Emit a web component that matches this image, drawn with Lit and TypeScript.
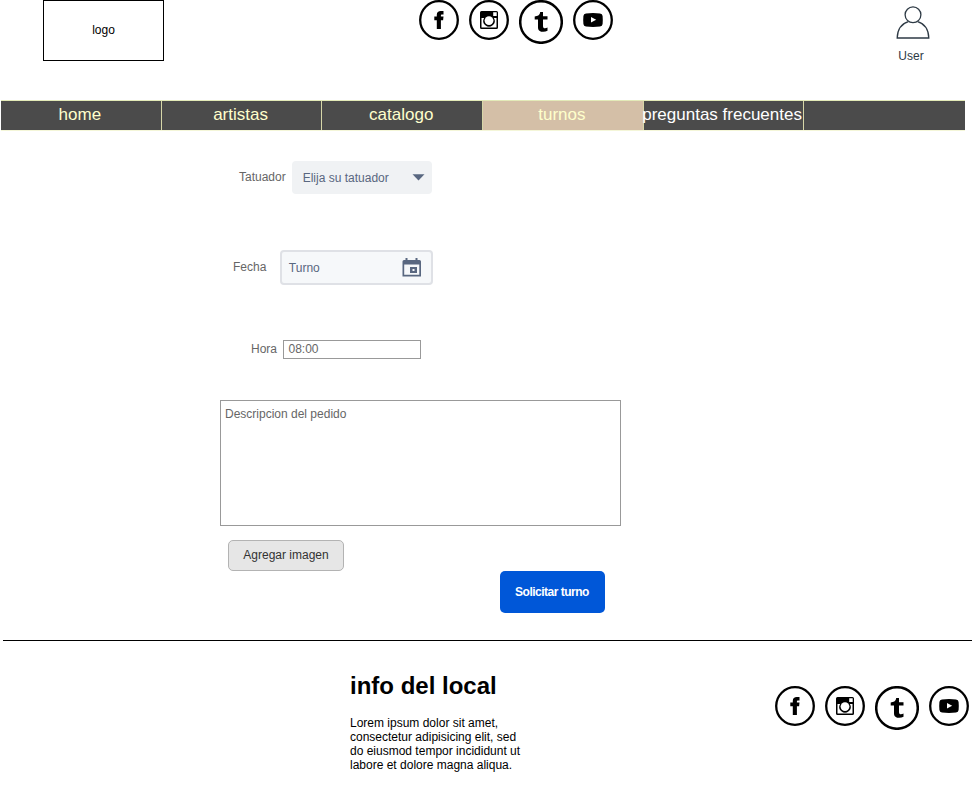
import { LitElement, html, css } from "lit";
import { customElement } from "lit/decorators.js";

@customElement("social-links")
class SocialLinks extends LitElement {
  static styles = css`
    :host { display: flex; gap: 10px; align-items: flex-start; }
    svg { display: block; }
  `;
  render() {
    return html`
      <svg width="40" height="40" viewBox="0 0 40 40">
        <circle cx="20" cy="20" r="18.8" fill="#fff" stroke="#000" stroke-width="2.3" />
        <path d="M17.8 29V20.3H15.3V16.6H17.8V14.8C17.8 12.2 19.4 11 21.8 11H24.5V14.4H23.2C22.1 14.4 21.9 14.9 21.9 15.7V16.6H24.5L24.1 20.3H21.9V29Z" />
      </svg>
      <svg width="40" height="40" viewBox="0 0 40 40">
        <circle cx="20" cy="20" r="18.8" fill="#fff" stroke="#000" stroke-width="2.3" />
        <path fill-rule="evenodd" d="M12.500 11H27.500Q29 11 29 12.500V27.500Q29 29 27.500 29H12.500Q11 29 11 27.500V12.500Q11 11 12.500 11ZM24.200 12.300V16H27.700V12.300ZM12.500 18V27.500H27.500V18H24.900A5.700 5.700 0 1 1 15.100 18Z" />
        <circle cx="20" cy="20.600" r="4.400" fill="#fff" />
      </svg>
      <svg width="44" height="44" viewBox="0 0 44 44">
        <circle cx="22" cy="22" r="20.800" fill="#fff" stroke="#000" stroke-width="2.500" />
        <path d="M18.600 15.800C20.200 15.200 21 13.800 21.200 12H24V16.200H28.500V19.600H24V26C24 27.800 24.700 28.300 25.900 28.300C26.900 28.300 27.700 28 28.500 27.600V30.800C27.200 31.500 25.800 31.800 24.300 31.800C21.200 31.800 19 30.400 19 27.400V19.600H15.700V16.600Z" />
      </svg>
      <svg width="40" height="40" viewBox="0 0 40 40">
        <circle cx="20" cy="20" r="18.800" fill="#fff" stroke="#000" stroke-width="2.300" />
        <path d="M13 13.400Q20 12.600 27 13.400Q29.400 13.600 29.600 16Q30 20 29.600 24Q29.400 26.400 27 26.600Q20 27.400 13 26.600Q10.600 26.400 10.400 24Q10 20 10.400 16Q10.600 13.600 13 13.400Z" />
        <path d="M18 17L23.200 19.800L18 22.600Z" fill="#fff" />
      </svg>
    `;
  }
}

@customElement("app-root")
class AppRoot extends LitElement {
  static styles = css`
    :host {
      display: flex; flex-direction: column; width: 974px; height: 787px; overflow: hidden;
      background: #fff; color: #000; font: 12px/14px "Liberation Sans", Arial, sans-serif;
      box-sizing: border-box;
    }
    * { box-sizing: border-box; }
    header { display: flex; height: 100px; align-items: flex-start; flex: none; }
    .logo { width: 121px; height: 61px; margin-left: 43px; padding-bottom: 2px; border: 1px solid #000; display: flex; align-items: center; justify-content: center; }
    .top-social { margin-left: 255px; }
    .user { margin-left: 283px; width: 33px; padding-top: 6px; display: flex; flex-direction: column; align-items: center; color: #2e3a45; }
    .user svg { display: block; margin-bottom: 10px; }
    .user .t { margin-left: -3px; }
    nav { display: flex; flex: none; height: 31px; width: 964px; margin-left: 1px; border-top: 1px solid #e3eab8; border-bottom: 1px solid #f4f6d8; background: #4b4b4b; }
    .tab { width: 160.7px; flex: none; padding-right: 2px; border-right: 1px solid #d6d6a8; color: #ffffcc; font-size: 17px; line-height: 27px; white-space: nowrap; display: flex; justify-content: center; }
    .tab.active { background: #d4bfa7; }
    .tab.light { color: #fff; padding-right: 3px; }
    main { display: flex; flex-direction: column; align-items: flex-start; height: 509px; flex: none; color: #666; }
    .row { display: flex; align-items: center; }
    .r1 { margin: 29px 0 0 239px; height: 34px; }
    .select { width: 140px; height: 33px; margin-left: 6px; padding: 1px 7px 0 11px; border-radius: 4px; background: #f0f2f4; color: #596780; display: flex; align-items: center; justify-content: space-between; }
    .r2 { margin: 55px 0 0 233px; height: 36px; }
    .date { width: 153px; height: 35px; margin-left: 13.500px; padding: 1px 10px 0 7px; border: 2px solid #dfe1e6; border-radius: 4px; background: #f6f8fa; color: #596780; display: flex; align-items: center; justify-content: space-between; }
    .r3 { margin: 55px 0 0 251px; height: 19px; align-items: flex-start; }
    .r3 .t { margin-top: 2px; }
    .hour { width: 138px; height: 19px; margin-left: 5.500px; padding: 1px 0 0 5px; border: 1px solid #999; }
    .desc { width: 401px; height: 126px; margin: 41px 0 0 219.500px; padding: 6px 4.500px; border: 1px solid #999; }
    .add { width: 116px; height: 31px; margin: 14px 0 0 228px; border: 1px solid #b3b3b3; border-radius: 5px; background: #e6e6e6; color: #333; text-align: center; line-height: 28px; }
    .send { width: 105px; height: 42px; margin: -0.500px 0 0 499.500px; border-radius: 5px; background: #0057d8; color: #fff; font-weight: bold; text-align: center; line-height: 43px; letter-spacing: -0.500px; }
    footer { display: flex; align-items: flex-start; margin-left: 3px; width: 969px; border-top: 1px solid #000; flex: 1; }
    .info { margin: 31px 0 0 347px; width: 180px; flex: none; }
    h1 { margin: 0; font-size: 24px; line-height: 28px; white-space: nowrap; }
    p { margin: 16px 0 0; white-space: nowrap; }
    .bottom-social { margin: 45px 0 0 245px; flex: none; }
    .t { white-space: nowrap; }
  `;
  render() {
    return html`
      <header>
        <div class="logo"><span class="t">logo</span></div>
        <social-links class="top-social"></social-links>
        <div class="user">
          <svg width="34" height="33" viewBox="0 0 34 33" fill="none" stroke="#2e3a45" stroke-width="1.3">
            <circle cx="17" cy="8.8" r="7.9" />
            <path d="M12.4 15.6C6 17.5 1.5 22 1.2 32H32.8C32.5 22 28 17.5 21.6 15.6" />
          </svg>
          <span class="t">User</span>
        </div>
      </header>
      <nav>
        <div class="tab"><span class="t">home</span></div>
        <div class="tab"><span class="t">artistas</span></div>
        <div class="tab"><span class="t">catalogo</span></div>
        <div class="tab active"><span class="t">turnos</span></div>
        <div class="tab light"><span class="t">preguntas frecuentes</span></div>
      </nav>
      <main>
        <div class="row r1">
          <span class="t">Tatuador</span>
          <div class="select"><span class="t">Elija su tatuador</span>
            <svg width="13" height="7" viewBox="0 0 13 7"><path d="M0.5 0.3H12.5L6.5 6.5Z" fill="#596780" /></svg>
          </div>
        </div>
        <div class="row r2">
          <span class="t">Fecha</span>
          <div class="date"><span class="t">Turno</span>
            <svg width="19" height="19" viewBox="0 0 19 19">
              <path fill="#596780" fill-rule="evenodd" d="M3.5 0H5.5V2H13.5V0H15.5V2H17.5Q19 2 19 3.5V18.5H0.5V3.5Q0.5 2 2 2H3.5ZM2.2 6.5V16.8H17.3V6.5ZM8 9H15V15H8ZM10.5 11V13H12.5V11Z" />
            </svg>
          </div>
        </div>
        <div class="row r3"><span class="t">Hora</span><div class="hour">08:00</div></div>
        <div class="desc">Descripcion del pedido</div>
        <div class="add">Agregar imagen</div>
        <div class="send">Solicitar turno</div>
      </main>
      <footer>
        <div class="info">
          <h1>info del local</h1>
          <p>Lorem ipsum dolor sit amet,<br />consectetur adipisicing elit, sed<br />do eiusmod tempor incididunt ut<br />labore et dolore magna aliqua.</p>
        </div>
        <social-links class="bottom-social"></social-links>
      </footer>
    `;
  }
}
